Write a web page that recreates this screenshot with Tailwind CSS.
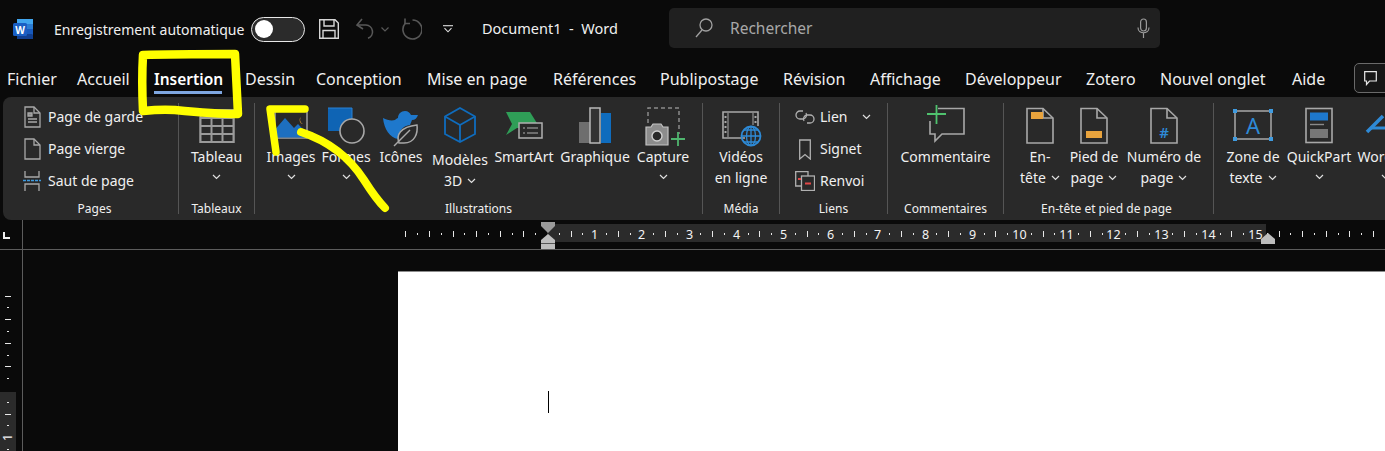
<!DOCTYPE html>
<html lang="fr">
<head>
  <meta charset="UTF-8">
  <title>Document1 - Word</title>
  <script src="https://cdn.jsdelivr.net/npm/@tailwindcss/browser@4"></script>
</head>
<body class="bg-[#0a0a0a] font-['Noto_Sans',sans-serif] text-[#f0f0f0] overflow-hidden">
  <div class="relative w-[1385px] h-[451px] overflow-hidden flex flex-col">

    <!-- title bar -->
    <div class="h-[58px] shrink-0 flex items-center">
      <svg class="ml-[13px] w-[20px] h-[20px]" viewBox="0 0 20 20">
        <rect x="4" y="0" width="16" height="20" rx="1.500" fill="#2b7cd3"/>
        <rect x="4" y="0" width="16" height="5" fill="#41a5ee"/>
        <rect x="4" y="10" width="16" height="5" fill="#185abd"/>
        <rect x="4" y="15" width="16" height="5" rx="1" fill="#103f91"/>
        <rect x="0" y="4" width="14" height="13" rx="1.500" fill="#1a5fc4"/>
        <text x="7" y="14.500" text-anchor="middle" font-size="10" font-weight="700" fill="#fff">W</text>
      </svg>
      <span class="ml-[21px] w-[197px] text-[14px] whitespace-nowrap">Enregistrement automatique</span>
      <div class="w-[54px] h-[25px] rounded-full border border-[#e8e8e8] bg-[#2b2b2b] flex items-center pl-[3px]">
        <div class="w-[18px] h-[18px] rounded-full bg-white"></div>
      </div>
      <svg class="ml-[14px] w-[20px] h-[20px]" viewBox="0 0 20 20" fill="none" stroke="#d6d6d6" stroke-width="1.400">
        <path d="M.7.7H16L19.300 4V19.300H.7Z"/><path d="M5 .7V7H15V.7"/><path d="M4 19.300V11.500H16V19.300"/>
      </svg>
      <svg class="ml-[16px] w-[20px] h-[22px]" viewBox="0 0 20 22" fill="none" stroke="#585858" stroke-width="1.600">
        <path d="M7 1 2 7l6 4"/><path d="M2.500 7H11a6.800 6.800 0 0 1 2 13.200"/>
      </svg>
      <svg class="ml-[6px] w-[8px] h-[5px]" viewBox="0 0 8 5" fill="none" stroke="#585858" stroke-width="1.200"><path d="m.5.5 3.500 3.500 3.500-3.500"/></svg>
      <svg class="ml-[12px] w-[21px] h-[22px]" viewBox="0 0 21 22" fill="none" stroke="#585858" stroke-width="1.600">
        <path d="M11.500 2a9.500 9.500 0 1 1-7 3"/><path d="M4 .5V5.500H9"/>
      </svg>
      <svg class="ml-[21px] w-[10px] h-[8px]" viewBox="0 0 10 8" fill="none" stroke="#e0e0e0" stroke-width="1.100"><path d="M0 .7H10"/><path d="m1.500 3.200 3.500 3.600 3.500-3.600"/></svg>
      <span class="ml-[29px] w-[187px] text-[14.500px] whitespace-nowrap">Document1&nbsp; -&nbsp; Word</span>
      <div class="w-[491px] h-[40px] -mt-[2px] rounded-[5px] bg-[#202020] flex items-center">
        <svg class="ml-[26px] w-[18px] h-[20px]" viewBox="0 0 18 20" fill="none" stroke="#a0a0a0" stroke-width="1.300"><circle cx="11" cy="7" r="6"/><path d="M7 12 1 19"/></svg>
        <span class="ml-[17px] mt-px text-[15.500px] text-[#a8a8a8]">Rechercher</span>
        <svg class="ml-auto mr-[10px] w-[13px] h-[21px]" viewBox="0 0 13 21" fill="none" stroke="#9a9a9a" stroke-width="1.200"><rect x="3.600" y="1" width="5.800" height="12" rx="2.900"/><path d="M1 9.500c0 7 11 7 11 0M6.500 15v5"/></svg>
      </div>
    </div>

    <!-- tabs -->
    <div class="h-[39px] shrink-0 flex pl-[7px] pt-[10px] text-[16px] leading-[22px] whitespace-nowrap">
      <div class="w-[70px] shrink-0">Fichier</div>
      <div class="w-[77px] shrink-0">Accueil</div>
      <div class="w-[91px] shrink-0"><div class="w-[68px] font-semibold text-[15.500px] text-white">Insertion</div><div class="w-[68px] h-[3px] mt-px bg-[#7ea6e0]"></div></div>
      <div class="w-[71px] shrink-0">Dessin</div>
      <div class="w-[111px] shrink-0">Conception</div>
      <div class="w-[126px] shrink-0">Mise en page</div>
      <div class="w-[107px] shrink-0">Références</div>
      <div class="w-[123px] shrink-0">Publipostage</div>
      <div class="w-[87px] shrink-0">Révision</div>
      <div class="w-[95px] shrink-0">Affichage</div>
      <div class="w-[121px] shrink-0">Développeur</div>
      <div class="w-[74px] shrink-0">Zotero</div>
      <div class="w-[132px] shrink-0">Nouvel onglet</div>
      <div class="w-[62px] shrink-0">Aide</div>
      <div class="w-[60px] h-[30px] -mt-[5px] shrink-0 rounded-[5px] border border-[#6a6a6a] bg-[#161616] pl-[9px] pt-[7px]">
        <svg class="w-[13px] h-[15px]" viewBox="0 0 13 15" fill="none" stroke="#e8e8e8" stroke-width="1.200"><path d="M.7.7H12.300V10H5.500L2.500 13.500V10H.7Z"/></svg>
      </div>
    </div>

    <!-- ribbon -->
    <div class="h-[123px] shrink-0 ml-[3px] bg-[#292929] rounded-l-[8px] flex text-[14px] leading-[20.500px] whitespace-nowrap">

      <!-- Pages -->
      <div class="w-[175px] shrink-0 flex flex-col">
        <div class="h-[104px] pt-[4px] pl-[19px]">
          <div class="h-[32px] flex items-center gap-[6px]">
            <svg class="w-[20px] h-[22px]" viewBox="0 0 20 22" fill="none" stroke="#a8a8a8" stroke-width="1.300"><path d="M3 1H12L18 7V21H3Z"/><path d="M12 1V7H18"/><path d="M6 7H10V10H6Z" fill="#8a8a8a"/><path d="M6 13H15M6 16H15"/></svg>
            <span>Page de garde</span>
          </div>
          <div class="h-[32px] flex items-center gap-[6px]">
            <svg class="w-[20px] h-[22px]" viewBox="0 0 20 22" fill="none" stroke="#a8a8a8" stroke-width="1.300"><path d="M3 1H12L18 7V21H3Z"/><path d="M12 1V7H18"/></svg>
            <span>Page vierge</span>
          </div>
          <div class="h-[32px] flex items-center gap-[6px]">
            <svg class="w-[20px] h-[20px]" viewBox="0 0 20 20" fill="none" stroke="#a8a8a8" stroke-width="1.300"><path d="M3 0V6H17V0"/><path d="M3 20V13H17V20"/><path d="M1 9.500H19" stroke="#3f9be0" stroke-dasharray="3 1"/></svg>
            <span>Saut de page</span>
          </div>
        </div>
        <div class="text-center text-[12px] leading-[16px] pl-[8px]">Pages</div>
      </div>
      <div class="w-px my-[6px] bg-[#555]"></div>

      <!-- Tableaux -->
      <div class="w-[75px] shrink-0 flex flex-col">
        <div class="h-[104px] pt-[10px] flex flex-col items-center">
          <svg class="w-[36px] h-[40px]" viewBox="0 0 36 40" fill="none" stroke="#9a9a9a" stroke-width="2"><rect x="1.500" y="3" width="33" height="32" fill="#5a5a5a"/><rect x="1.500" y="11" width="33" height="24" fill="#292929"/><path d="M12.500 11V35M23.500 11V35M1.500 19H34.500M1.500 27H34.500"/></svg>
          <span>Tableau</span>
          <svg class="mt-[6px] w-[9px] h-[6px]" viewBox="0 0 9 6" fill="none" stroke="#e0e0e0" stroke-width="1.200"><path d="m1 1 3.500 3.500L8 1"/></svg>
        </div>
        <div class="text-center text-[12px] leading-[16px]">Tableaux</div>
      </div>
      <div class="w-px my-[6px] bg-[#555]"></div>

      <!-- Illustrations -->
      <div class="w-[447px] shrink-0 flex flex-col">
        <div class="h-[104px] pt-[10px] pl-[8px] flex">
          <div class="w-[56px] flex flex-col items-center">
            <svg class="w-[40px] h-[40px]" viewBox="0 0 40 40" fill="none"><rect x="4" y="4" width="32" height="27" fill="#292929" stroke="#a0a0a0" stroke-width="1.500"/><path d="M4.500 30.500V22L14 11l9 10 4-4 8.500 9v4.500Z" fill="#1d6fc0"/><path d="M30 10a4 4 0 0 0 2 7 4.500 4.500 0 0 1-2-7" fill="#e8a33d"/></svg>
            <span>Images</span>
            <svg class="mt-[6px] w-[9px] h-[6px]" viewBox="0 0 9 6" fill="none" stroke="#e0e0e0" stroke-width="1.200"><path d="m1 1 3.500 3.500L8 1"/></svg>
          </div>
          <div class="w-[54px] flex flex-col items-center">
            <svg class="w-[40px] h-[40px]" viewBox="0 0 40 40" fill="none"><rect x="2" y="1" width="24" height="23" fill="#0f64b4"/><path d="M2 1H26V24" stroke="#2a82d6" stroke-width="1"/><circle cx="26" cy="24" r="12" fill="#292929" stroke="#a8a8a8" stroke-width="1.600"/></svg>
            <span>Formes</span>
            <svg class="mt-[6px] w-[9px] h-[6px]" viewBox="0 0 9 6" fill="none" stroke="#e0e0e0" stroke-width="1.200"><path d="m1 1 3.500 3.500L8 1"/></svg>
          </div>
          <div class="w-[56px] flex flex-col items-center">
            <svg class="w-[40px] h-[40px]" viewBox="0 0 40 40" fill="none"><path d="M2 11c4 2 8 3 12 2 1-1 2-2 3-2 0-4 3-7 7-7 3 0 5 2 6 4h7c-1 3-3 5-6 5l-2 5c-7 1-11 5-12 14C9 31 3 22 2 11Z" fill="#1e78cc"/><path d="M18 36c-3-8 1-16 18-18 1 8-2 18-13 18Z" fill="#292929" stroke="#a8a8a8" stroke-width="1.500"/><path d="M13 39 29 23" stroke="#a8a8a8" stroke-width="1.500"/></svg>
            <span>Icônes</span>
          </div>
          <div class="w-[62px] flex flex-col items-center">
            <svg class="w-[40px] h-[40px]" viewBox="0 0 40 40" fill="none" stroke="#0f6cbd" stroke-width="1.800"><path d="M20 1 35 9.500V27L20 35 5 27V9.500Z"/><path d="M5 9.500 20 18 35 9.500M20 18V35"/></svg>
            <span class="mt-[3px]">Modèles</span>
            <span class="flex items-center gap-[5px]">3D <svg class="w-[9px] h-[6px]" viewBox="0 0 9 6" fill="none" stroke="#e0e0e0" stroke-width="1.200"><path d="m1 1 3.500 3.500L8 1"/></svg></span>
          </div>
          <div class="w-[66px] flex flex-col items-center">
            <svg class="w-[40px] h-[40px]" viewBox="0 0 40 40" fill="none"><path d="M2 5H26L36 21H13L2 28 8 17Z" fill="#2f9e57"/><rect x="15" y="16" width="23" height="15" fill="#292929" stroke="#b0b0b0" stroke-width="1.500"/><path d="M19 21H21M23 21H34M19 26H21M23 26H34" stroke="#b0b0b0" stroke-width="1.200"/></svg>
            <span>SmartArt</span>
          </div>
          <div class="w-[76px] flex flex-col items-center">
            <svg class="w-[40px] h-[40px]" viewBox="0 0 40 40" fill="none"><rect x="4" y="15" width="11" height="21" fill="#6e6e6e"/><rect x="15" y="1" width="10" height="35" fill="#333" stroke="#b8b8b8" stroke-width="1.500"/><rect x="26" y="6" width="10" height="30" fill="#0f6cbd"/></svg>
            <span>Graphique</span>
          </div>
          <div class="w-[60px] flex flex-col items-center">
            <svg class="w-[44px] h-[40px]" viewBox="0 0 44 40" fill="none"><path d="M7 16V1H38V27" stroke="#8a8a8a" stroke-width="1.500" stroke-dasharray="4 3"/><path d="M5 20H10L12 17H20L22 20H27V38H5Z" fill="#8c8c8c" stroke="#c4c4c4" stroke-width="1.200"/><circle cx="16" cy="29" r="5" fill="#292929" stroke="#d0d0d0" stroke-width="1.400"/><path d="M30 32H44M37 25V39" stroke="#4fb56e" stroke-width="1.800"/></svg>
            <span>Capture</span>
            <svg class="mt-[6px] w-[9px] h-[6px]" viewBox="0 0 9 6" fill="none" stroke="#e0e0e0" stroke-width="1.200"><path d="m1 1 3.500 3.500L8 1"/></svg>
          </div>
        </div>
        <div class="text-center text-[12px] leading-[16px]">Illustrations</div>
      </div>
      <div class="w-px my-[6px] bg-[#555]"></div>

      <!-- Média -->
      <div class="w-[76px] shrink-0 flex flex-col">
        <div class="h-[104px] pt-[10px] flex flex-col items-center">
          <svg class="w-[42px] h-[40px]" viewBox="0 0 42 40" fill="none"><path d="M25 31H3V5H38V19" stroke="#a8a8a8" stroke-width="1.600"/><path d="M8 6V30M33 6V18" stroke="#a8a8a8" stroke-width="1"/><path d="M5.500 9V27M35.500 9V17" stroke="#a8a8a8" stroke-width="2" stroke-dasharray="2 3"/><circle cx="31" cy="29" r="9.500" stroke="#2e8ad6" stroke-width="1.800"/><path d="M21.500 29H40.500M31 19.500V38.500M24 23H38M24 35H38" stroke="#2e8ad6" stroke-width="1.300"/><ellipse cx="31" cy="29" rx="4.500" ry="9.500" stroke="#2e8ad6" stroke-width="1.300"/></svg>
          <span>Vidéos</span>
          <span>en ligne</span>
        </div>
        <div class="text-center text-[12px] leading-[16px]">Média</div>
      </div>
      <div class="w-px my-[6px] bg-[#555]"></div>

      <!-- Liens -->
      <div class="w-[107px] shrink-0 flex flex-col">
        <div class="h-[104px] pt-[4px] pl-[15px]">
          <div class="h-[32px] flex items-center gap-[5px]">
            <svg class="w-[20px] h-[14px]" viewBox="0 0 20 14" fill="none" stroke="#b0b0b0" stroke-width="1.300"><path d="M8 1H5a4 4 0 0 0 0 8h3a4 4 0 0 0 3-6"/><path d="M12 13h3a4 4 0 0 0 0-8h-3a4 4 0 0 0-3 6"/></svg>
            <span>Lien</span>
            <svg class="ml-[9px] w-[9px] h-[6px]" viewBox="0 0 9 6" fill="none" stroke="#e0e0e0" stroke-width="1.200"><path d="m1 1 3.500 3.500L8 1"/></svg>
          </div>
          <div class="h-[32px] flex items-center gap-[5px]">
            <svg class="w-[20px] h-[21px]" viewBox="0 0 20 21" fill="none" stroke="#b0b0b0" stroke-width="1.300"><path d="M4.700 1H15.300V20L10 15.500 4.700 20Z"/></svg>
            <span>Signet</span>
          </div>
          <div class="h-[32px] flex items-center gap-[5px]">
            <svg class="w-[20px] h-[20px]" viewBox="0 0 20 20" fill="none" stroke="#b0b0b0" stroke-width="1.300"><path d="M6 15H.7V.7H13V5"/><rect x="6.500" y="5" width="13" height="14.500" fill="#292929"/><path d="M3 8H6M10 12.500H16" stroke="#e04848" stroke-width="1.800"/></svg>
            <span>Renvoi</span>
          </div>
        </div>
        <div class="text-center text-[12px] leading-[16px]">Liens</div>
      </div>
      <div class="w-px my-[6px] bg-[#555]"></div>

      <!-- Commentaires -->
      <div class="w-[115px] shrink-0 flex flex-col">
        <div class="h-[104px] pt-[10px] flex flex-col items-center">
          <svg class="w-[40px] h-[40px] overflow-visible" viewBox="0 0 40 40" fill="none"><path d="M12 1.500H38V27H16L9 34V27H4V14" stroke="#a8a8a8" stroke-width="1.600"/><path d="M1 7H20M10.500 -2V17" stroke="#4fc26e" stroke-width="1.800"/></svg>
          <span>Commentaire</span>
        </div>
        <div class="text-center text-[12px] leading-[16px]">Commentaires</div>
      </div>
      <div class="w-px my-[6px] bg-[#555]"></div>

      <!-- En-tête et pied de page -->
      <div class="w-[209px] shrink-0 flex flex-col">
        <div class="h-[104px] pt-[10px] pl-[8px] flex">
          <div class="w-[56px] flex flex-col items-center">
            <svg class="w-[30px] h-[40px]" viewBox="0 0 30 40" fill="none"><path d="M2 1.500H18L28 11V36H2Z" stroke="#a8a8a8" stroke-width="1.600"/><path d="M18 1.500V11H28" stroke="#a8a8a8" stroke-width="1.600"/><rect x="6" y="5" width="12" height="7" fill="#e8a33d"/></svg>
            <span>En-</span>
            <span class="flex items-center gap-[5px]">tête <svg class="w-[9px] h-[6px]" viewBox="0 0 9 6" fill="none" stroke="#e0e0e0" stroke-width="1.200"><path d="m1 1 3.500 3.500L8 1"/></svg></span>
          </div>
          <div class="w-[52px] flex flex-col items-center">
            <svg class="w-[30px] h-[40px]" viewBox="0 0 30 40" fill="none"><path d="M2 1.500H18L28 11V36H2Z" stroke="#a8a8a8" stroke-width="1.600"/><path d="M18 1.500V11H28" stroke="#a8a8a8" stroke-width="1.600"/><rect x="7" y="24" width="16" height="7" fill="#e8a33d"/></svg>
            <span>Pied de</span>
            <span class="flex items-center gap-[5px]">page <svg class="w-[9px] h-[6px]" viewBox="0 0 9 6" fill="none" stroke="#e0e0e0" stroke-width="1.200"><path d="m1 1 3.500 3.500L8 1"/></svg></span>
          </div>
          <div class="w-[88px] flex flex-col items-center">
            <svg class="w-[30px] h-[40px]" viewBox="0 0 30 40" fill="none"><path d="M2 1.500H18L28 11V36H2Z" stroke="#a8a8a8" stroke-width="1.600"/><path d="M18 1.500V11H28" stroke="#a8a8a8" stroke-width="1.600"/><text x="15" y="31" text-anchor="middle" font-size="15" font-weight="600" fill="#2e8ad6" stroke="none">#</text></svg>
            <span>Numéro de</span>
            <span class="flex items-center gap-[5px]">page <svg class="w-[9px] h-[6px]" viewBox="0 0 9 6" fill="none" stroke="#e0e0e0" stroke-width="1.200"><path d="m1 1 3.500 3.500L8 1"/></svg></span>
          </div>
        </div>
        <div class="text-center text-[12px] leading-[16px] pr-[4px]">En-tête et pied de page</div>
      </div>
      <div class="w-px my-[6px] bg-[#555]"></div>

      <!-- Texte -->
      <div class="flex-1 overflow-hidden">
        <div class="h-[104px] pt-[10px] pl-[8px] flex">
          <div class="w-[62px] shrink-0 flex flex-col items-center">
            <svg class="w-[42px] h-[40px]" viewBox="0 0 42 40" fill="none"><rect x="3" y="4" width="36" height="28" stroke="#a8a8a8" stroke-width="1.500"/><path d="M1 2H5V6H1ZM37 2H41V6H37ZM1 30H5V34H1ZM37 30H41V34H37Z" fill="#3f9be0"/><text x="21" y="27" text-anchor="middle" font-size="22" fill="#2e8ad6">A</text></svg>
            <span>Zone de</span>
            <span class="flex items-center gap-[5px]">texte <svg class="w-[9px] h-[6px]" viewBox="0 0 9 6" fill="none" stroke="#e0e0e0" stroke-width="1.200"><path d="m1 1 3.500 3.500L8 1"/></svg></span>
          </div>
          <div class="w-[70px] shrink-0 flex flex-col items-center">
            <svg class="w-[30px] h-[40px]" viewBox="0 0 30 40" fill="none"><rect x="2" y="1.500" width="26" height="34" stroke="#a8a8a8" stroke-width="1.600"/><rect x="6" y="5.500" width="18" height="8" fill="#1e78cc"/><path d="M6 17.500H20" stroke="#8a8a8a" stroke-width="1.400"/><rect x="6" y="22" width="18" height="9" fill="#777"/></svg>
            <span>QuickPart</span>
            <svg class="mt-[6px] w-[9px] h-[6px]" viewBox="0 0 9 6" fill="none" stroke="#e0e0e0" stroke-width="1.200"><path d="m1 1 3.500 3.500L8 1"/></svg>
          </div>
          <div class="w-[62px] shrink-0 flex flex-col items-center">
            <svg class="w-[40px] h-[40px]" viewBox="0 0 40 40" fill="none"><path d="M2 25 18 9" stroke="#2e8ad6" stroke-width="3.500"/><path d="M6 21H20" stroke="#2e8ad6" stroke-width="3"/></svg>
            <span>WordArt</span>
            <svg class="mt-[6px] w-[9px] h-[6px]" viewBox="0 0 9 6" fill="none" stroke="#e0e0e0" stroke-width="1.200"><path d="m1 1 3.500 3.500L8 1"/></svg>
          </div>
        </div>
      </div>
    </div>

    <!-- horizontal ruler -->
    <div class="h-[30px] shrink-0 border-b border-[#5c5c5c] relative">
      <svg id="hRuler" class="block w-[1385px] h-[29px]" viewBox="0 0 1385 29">
        <path d="M3 12V19H10V17H5V12Z" fill="#f0f0f0"/>
        <path d="M22.500 0V29" stroke="#5c5c5c"/>
        <rect x="547" y="4" width="719" height="18" fill="#2b2b2b"/>
      </svg>
    </div>

    <!-- document -->
    <div class="flex-1 flex min-h-0">
      <div class="w-[23px] shrink-0 border-r border-[#5c5c5c]">
        <svg id="vRuler" class="block w-[22px] h-[201px]" viewBox="0 0 22 201">
          <rect x="0" y="142" width="16" height="59" fill="#2b2b2b"/>
        </svg>
      </div>
      <div class="w-[375px] shrink-0"></div>
      <div class="flex-1 mt-[21px] bg-white border-t border-[#8c8c8c]">
        <div class="ml-[150px] mt-[119px] w-px h-[22px] bg-black"></div>
      </div>
    </div>

    <!-- indent markers on the ruler -->
    <svg class="absolute left-[541px] top-[222px] w-[14px] h-[28px]" viewBox="0 0 14 28">
      <path d="M0 0H14V4L7 11 0 4Z" fill="#9a9a9a"/>
      <path d="M7 12 14 18V27H0V18Z" fill="#bdbdbd"/>
      <path d="M0 21.500H14" stroke="#555"/>
    </svg>
    <svg class="absolute left-[1261px] top-[233px] w-[14px] h-[11px]" viewBox="0 0 14 11"><path d="M7 0 14 6V11H0V6Z" fill="#bdbdbd"/></svg>

    <!-- yellow marker annotation -->
    <svg class="absolute left-0 top-0 w-[1385px] h-[451px] pointer-events-none" viewBox="0 0 1385 451" fill="none" stroke="#ffff00" stroke-linecap="round" stroke-linejoin="round">
      <path stroke-width="8.500" d="M143 111C142 90 142 72 143 55 170 54 205 54 235 54 236 75 237 95 238 114 215 114 195 112 175 110 162 109 152 110 143 111Z"/>
      <path stroke-width="7.500" d="M276 152C274 138 272 124 270 109H305"/>
      <path stroke-width="8" d="M301 132C325 140 348 155 364 180 371 191 378 201 385 208"/>
    </svg>
  </div>

  <script>
    const NS = 'http://www.w3.org/2000/svg';
    function add(svg, tag, attrs, text) {
      const el = document.createElementNS(NS, tag);
      Object.keys(attrs).forEach(k => el.setAttribute(k, attrs[k]));
      if (text) el.textContent = text;
      svg.appendChild(el);
    }
    // horizontal ruler, 11.8px per quarter cm, zero at the left margin
    const h = document.getElementById('hRuler');
    for (let k = -12; k <= 70; k++) {
      if (k === 0) continue;
      const x = Math.round(547 + k * 11.8) + 0.5;
      if (k > 0 && k % 4 === 0 && k <= 60) {
        add(h, 'text', { x: x, y: 18.5, 'text-anchor': 'middle', 'font-size': 12.5, fill: '#f4f4f4' }, String(k / 4));
      } else if (k % 2 === 0) {
        add(h, 'path', { d: `M${x} 11V17`, stroke: '#e8e8e8' });
      } else {
        add(h, 'path', { d: `M${x} 13V15`, stroke: '#e8e8e8' });
      }
    }
    // vertical ruler, the page starts at y=140 here
    const v = document.getElementById('vRuler');
    for (let k = -8; k <= 5; k++) {
      if (k === 0) continue;
      const y = Math.round(140 + k * 11.8) + 0.5;
      if (k === 4) {
        add(v, 'text', { x: 0, y: 0, transform: `translate(12 ${y}) rotate(-90)`, 'text-anchor': 'middle', 'font-size': 12.5, fill: '#f4f4f4' }, '1');
      } else if (k % 2 === 0) {
        add(v, 'path', { d: `M5 ${y}H11`, stroke: '#e8e8e8' });
      } else {
        add(v, 'path', { d: `M7 ${y}H9`, stroke: '#e8e8e8' });
      }
    }
  </script>
</body>
</html>
